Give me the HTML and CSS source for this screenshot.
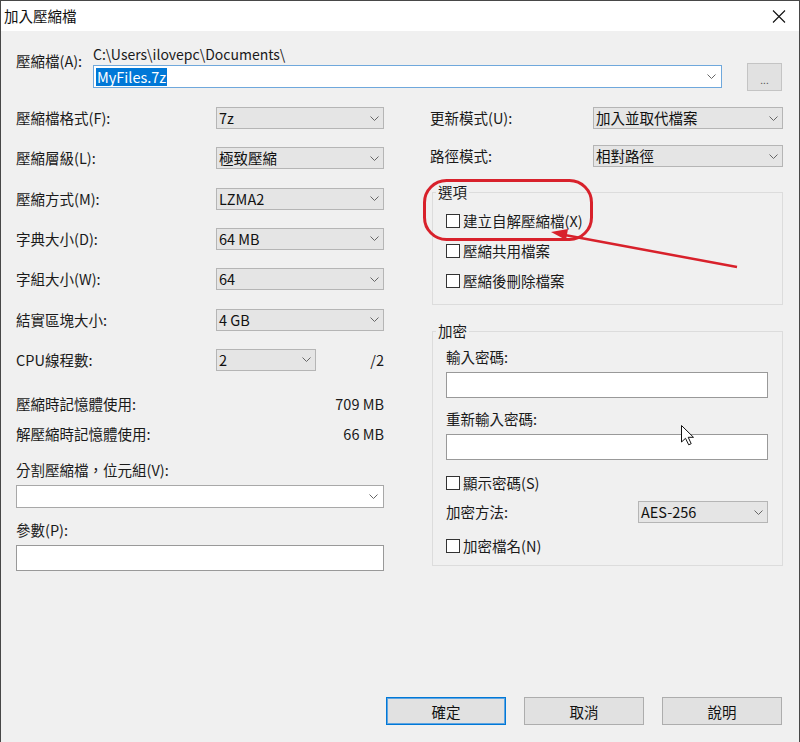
FILE: index.html
```html
<!DOCTYPE html>
<html lang="zh-Hant">
<head>
    <meta charset="UTF-8">
    <title>加入壓縮檔</title>
    <link rel="stylesheet" href="styles.css">
</head>
<body>
    <div class="window">
        <div class="titlebar">
            <span class="title">加入壓縮檔</span>
            <svg class="close" width="14" height="13" viewBox="0 0 14 13">
                <path d="M1 0.5L13 12.5M13 0.5L1 12.5" stroke="#111" stroke-width="1.1" fill="none"/>
            </svg>
        </div>

        <div class="content">
            <div class="archive">
                <div class="archive-label">壓縮檔(A):</div>
                <div class="archive-fields">
                    <div class="archive-path">C:\Users\ilovepc\Documents\</div>
                    <div class="combo combo-focus">
                        <span class="selected-text">MyFiles.7z</span>
                        <svg class="chevron" width="9" height="5" viewBox="0 0 9 5"><polyline points="0.5,0.5 4.5,4.5 8.5,0.5"/></svg>
                    </div>
                </div>
                <button class="browse">...</button>
            </div>

            <div class="main">
                <div class="col-left">
                    <div class="row">
                        <span class="label">壓縮檔格式(F):</span>
                        <div class="select"><span>7z</span><svg class="chevron" width="9" height="5" viewBox="0 0 9 5"><polyline points="0.5,0.5 4.5,4.5 8.5,0.5"/></svg></div>
                    </div>
                    <div class="row">
                        <span class="label">壓縮層級(L):</span>
                        <div class="select"><span>極致壓縮</span><svg class="chevron" width="9" height="5" viewBox="0 0 9 5"><polyline points="0.5,0.5 4.5,4.5 8.5,0.5"/></svg></div>
                    </div>
                    <div class="row">
                        <span class="label">壓縮方式(M):</span>
                        <div class="select"><span>LZMA2</span><svg class="chevron" width="9" height="5" viewBox="0 0 9 5"><polyline points="0.5,0.5 4.5,4.5 8.5,0.5"/></svg></div>
                    </div>
                    <div class="row">
                        <span class="label">字典大小(D):</span>
                        <div class="select"><span>64 MB</span><svg class="chevron" width="9" height="5" viewBox="0 0 9 5"><polyline points="0.5,0.5 4.5,4.5 8.5,0.5"/></svg></div>
                    </div>
                    <div class="row">
                        <span class="label">字組大小(W):</span>
                        <div class="select"><span>64</span><svg class="chevron" width="9" height="5" viewBox="0 0 9 5"><polyline points="0.5,0.5 4.5,4.5 8.5,0.5"/></svg></div>
                    </div>
                    <div class="row">
                        <span class="label">結實區塊大小:</span>
                        <div class="select"><span>4 GB</span><svg class="chevron" width="9" height="5" viewBox="0 0 9 5"><polyline points="0.5,0.5 4.5,4.5 8.5,0.5"/></svg></div>
                    </div>
                    <div class="row">
                        <span class="label">CPU線程數:</span>
                        <div class="cpu-group">
                            <div class="select select-small"><span>2</span><svg class="chevron" width="9" height="5" viewBox="0 0 9 5"><polyline points="0.5,0.5 4.5,4.5 8.5,0.5"/></svg></div>
                            <span class="cpu-max">/2</span>
                        </div>
                    </div>

                    <div class="info-row">
                        <span>壓縮時記憶體使用:</span>
                        <span>709 MB</span>
                    </div>
                    <div class="info-row">
                        <span>解壓縮時記憶體使用:</span>
                        <span>66 MB</span>
                    </div>

                    <div class="field-label">分割壓縮檔，位元組(V):</div>
                    <div class="combo combo-white">
                        <span></span>
                        <svg class="chevron" width="9" height="5" viewBox="0 0 9 5"><polyline points="0.5,0.5 4.5,4.5 8.5,0.5"/></svg>
                    </div>
                    <div class="field-label label-params">參數(P):</div>
                    <div class="textbox"></div>
                </div>

                <div class="col-right">
                    <div class="row">
                        <span class="label">更新模式(U):</span>
                        <div class="select select-wide"><span>加入並取代檔案</span><svg class="chevron" width="9" height="5" viewBox="0 0 9 5"><polyline points="0.5,0.5 4.5,4.5 8.5,0.5"/></svg></div>
                    </div>
                    <div class="row">
                        <span class="label">路徑模式:</span>
                        <div class="select select-wide"><span>相對路徑</span><svg class="chevron" width="9" height="5" viewBox="0 0 9 5"><polyline points="0.5,0.5 4.5,4.5 8.5,0.5"/></svg></div>
                    </div>

                    <fieldset class="group group-options">
                        <legend>選項</legend>
                        <label class="check-row"><span class="checkbox"></span>建立自解壓縮檔(X)</label>
                        <label class="check-row"><span class="checkbox"></span>壓縮共用檔案</label>
                        <label class="check-row"><span class="checkbox"></span>壓縮後刪除檔案</label>
                    </fieldset>

                    <fieldset class="group group-encrypt">
                        <legend>加密</legend>
                        <div class="pw-label">輸入密碼:</div>
                        <div class="textbox pw-box"></div>
                        <div class="pw-label pw-label-second">重新輸入密碼:</div>
                        <div class="textbox pw-box"></div>
                        <label class="check-row check-small"><span class="checkbox"></span>顯示密碼(S)</label>
                        <div class="row method-row">
                            <span class="label">加密方法:</span>
                            <div class="select select-method"><span>AES-256</span><svg class="chevron" width="9" height="5" viewBox="0 0 9 5"><polyline points="0.5,0.5 4.5,4.5 8.5,0.5"/></svg></div>
                        </div>
                        <label class="check-row check-small check-last"><span class="checkbox"></span>加密檔名(N)</label>
                    </fieldset>
                </div>
            </div>

            <div class="footer">
                <button class="btn btn-default">確定</button>
                <button class="btn">取消</button>
                <button class="btn">說明</button>
            </div>
        </div>

        <!-- red markup and the mouse pointer drawn over the dialog -->
        <svg class="overlay" width="800" height="742" viewBox="0 0 800 742">
            <rect x="424.5" y="180.5" width="167" height="59" rx="22" ry="22" fill="none" stroke="#d8212b" stroke-width="3"/>
            <line x1="737" y1="267" x2="562" y2="234.5" stroke="#d8212b" stroke-width="2.5"/>
            <polygon points="551,232 568,229 566,240" fill="#d8212b"/>
            <path d="M681.5 425.5 V442 L685.5 438.3 L688.7 444.8 L691.2 443.7 L688.2 437.3 H693.5 Z" fill="#fff" stroke="#111" stroke-width="1" stroke-linejoin="round"/>
        </svg>
    </div>
</body>
</html>
```

FILE: styles.css
```css
* {
    box-sizing: border-box;
}

body {
    margin: 0;
    background: #fff;
    font-family: "Noto Sans CJK TC", "Liberation Sans", sans-serif;
    font-size: 14.5px;
    line-height: 18px;
    color: #1a1a1a;
}

.window {
    position: relative;
    width: 800px;
    height: 742px;
    border: 1px solid #474747;
    border-bottom: none;
    background: #f0f0f0;
    display: flex;
    flex-direction: column;
    overflow: hidden;
}

.titlebar {
    height: 30px;
    flex-shrink: 0;
    background: #fff;
    display: flex;
    align-items: center;
    justify-content: space-between;
    padding: 0 13px 0 3px;
}

.title {
    color: #111;
}

.content {
    flex: 1;
    display: flex;
    flex-direction: column;
    padding: 15px 16px 17px 15px;
}

/* archive name row */
.archive {
    display: flex;
    align-items: flex-start;
}

.archive-label {
    width: 77px;
    padding-top: 6px;
}

.archive-fields {
    width: 629px;
}

.archive-path {
    height: 17px;
    line-height: 17px;
    font-size: 14px;
}

.combo {
    height: 23px;
    display: flex;
    align-items: center;
    justify-content: space-between;
    padding: 0 5px 0 2px;
    background: #fff;
    border: 1px solid #a8a8a8;
}

.combo-focus {
    margin-top: 2px;
    border-color: #6fa8dc;
}

.selected-text {
    background: #0078d7;
    color: #fff;
    padding: 0 1px;
}

.chevron {
    flex-shrink: 0;
}

.chevron polyline {
    fill: none;
    stroke: #666;
    stroke-width: 1;
}

.browse {
    width: 35px;
    height: 28px;
    margin: 17px 0 0 25px;
    padding: 6px 0 0;
    background: #e1e1e1;
    border: 1px solid #c4c4c4;
    font-family: inherit;
    font-size: 10px;
    line-height: 10px;
    color: #555;
}

/* two columns */
.main {
    display: flex;
    gap: 46px;
    margin-top: 16px;
}

.col-left {
    width: 368px;
}

.col-right {
    width: 353px;
}

.row {
    display: flex;
    align-items: center;
    height: 22px;
    margin-bottom: 18.33px;
}

.col-right .row {
    margin-bottom: 16px;
}

.row .label {
    flex: 1;
}

.select {
    width: 168px;
    height: 22px;
    display: flex;
    align-items: center;
    justify-content: space-between;
    padding: 0 4px 0 2px;
    background: #e5e5e5;
    border: 1px solid #b5b5b5;
    color: #111;
}

.select-small {
    width: 100px;
}

.select-wide {
    width: 190px;
}

.cpu-group {
    width: 168px;
    display: flex;
    align-items: center;
}

.cpu-max {
    flex: 1;
    text-align: right;
}

.info-row {
    display: flex;
    align-items: center;
    justify-content: space-between;
    height: 30px;
}

.field-label {
    margin-top: 12px;
}

.label-params {
    margin-top: 13px;
}

.combo-white {
    margin-top: 6px;
}

.textbox {
    height: 26px;
    margin-top: 6px;
    background: #fff;
    border: 1px solid #999;
}

/* group boxes */
.group {
    margin: 1px 0 0 2px;
    min-width: 0;
    width: 351px;
    border: 1px solid #dcdcdc;
    padding: 5px 14px 8px 13px;
}

.group legend {
    padding: 0 2px;
    margin-left: -10px;
    line-height: 18px;
}

.group-encrypt {
    margin-top: 17px;
    padding-top: 8px;
    padding-bottom: 7px;
}

.check-row {
    display: flex;
    align-items: center;
    height: 30px;
}

.checkbox {
    width: 14px;
    height: 14px;
    margin-right: 3px;
    background: #fff;
    border: 1px solid #333;
}

.check-small {
    height: 24px;
    margin-top: 11px;
}

.pw-label-second {
    margin-top: 12px;
}

.group .method-row {
    margin: 6px 0 0;
}

.select-method {
    width: 130px;
}

/* dialog buttons */
.footer {
    margin-top: auto;
    display: flex;
    justify-content: flex-end;
    gap: 18px;
    padding-right: 1px;
}

.btn {
    width: 120px;
    height: 28px;
    background: #e1e1e1;
    border: 1px solid #adadad;
    font-family: inherit;
    font-size: 14.5px;
    color: #111;
}

.btn-default {
    border-color: #0078d7;
    box-shadow: inset 0 0 0 1px #5fa4e0;
}

.overlay {
    position: absolute;
    left: -1px;
    top: -1px;
    pointer-events: none;
}
```
